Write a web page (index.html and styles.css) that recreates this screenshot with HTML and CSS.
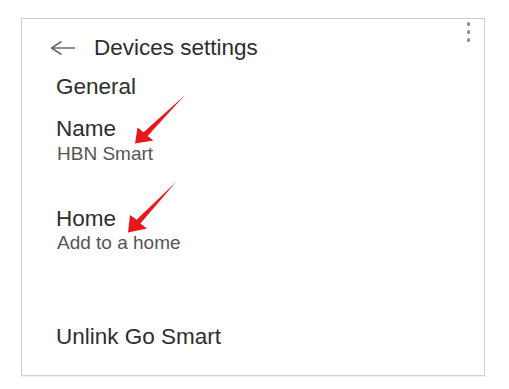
FILE: index.html
```html
<!DOCTYPE html>
<html>
<head>
<meta charset="utf-8">
<link rel="stylesheet" href="styles.css">
</head>
<body>
<div class="card">
  <div class="menu"><span class="dot"></span><span class="dot"></span><span class="dot"></span></div>
  <div class="header">
    <svg class="back" width="26" height="16" viewBox="0 0 26 16"><path d="M25 8H1.5M11.5 1.5L1.5 8l10 6.5" fill="none" stroke="#6b6b6b" stroke-width="1.5" stroke-linejoin="round"/></svg>
    <span class="title">Devices settings</span>
  </div>
  <div class="section">General</div>
  <div class="item name">
    <div class="label">Name</div>
    <div class="value">HBN Smart</div>
  </div>
  <div class="item home">
    <div class="label">Home</div>
    <div class="value">Add to a home</div>
  </div>
  <div class="unlink">Unlink Go Smart</div>
</div>
<svg class="annot" width="509" height="389" viewBox="0 0 509 389">
  <polygon points="184.5,95.5 147.6,136 153.5,140.5 135,143.5 137.5,127.5 143.6,132.2" fill="#e8161d"/>
  <polygon points="176,182 140.4,223.4 147,228.5 128,232.5 130,215 136.6,219.8" fill="#e8161d"/>
</svg>
</body>
</html>
```
FILE: styles.css
```css
html, body {
  margin: 0;
  padding: 0;
  background: #ffffff;
}
body {
  position: relative;
  width: 509px;
  height: 389px;
  font-family: "Liberation Sans", Arial, sans-serif;
  color: #2e2e2e;
  padding-top: 18px;
  box-sizing: border-box;
}
.card {
  position: relative;
  margin-left: 21px;
  width: 464px;
  height: 358px;
  box-sizing: border-box;
  border: 1px solid #cfcfcf;
  box-shadow: 0 1px 1px rgba(0,0,0,0.06);
  background: #fff;
  padding-top: 16px;
}
.menu {
  position: absolute;
  top: 3px;
  right: 14px;
  display: flex;
  flex-direction: column;
  gap: 4.5px;
}
.dot {
  width: 3.5px;
  height: 3.5px;
  border-radius: 50%;
  background: #8a8a8a;
}
.header {
  display: flex;
  align-items: center;
  padding-left: 28px;
  height: 26px;
}
.back {
  display: block;
  margin-right: 18px;
}
.title {
  font-size: 22.5px;
  line-height: 26px;
  color: #2e2e2e;
}
.section, .label, .unlink {
  font-size: 22.5px;
  line-height: 26px;
  padding-left: 34px;
}
.section {
  margin-top: 13px;
}
.item.name {
  margin-top: 16px;
}
.item.home {
  margin-top: 41px;
}
.value {
  font-size: 19px;
  line-height: 22px;
  color: #555555;
  padding-left: 35px;
  margin-top: 1px;
}
.home .value {
  margin-top: 0;
}
.unlink {
  margin-top: 70px;
}
.annot {
  position: absolute;
  left: 0;
  top: 0;
  pointer-events: none;
}
```
